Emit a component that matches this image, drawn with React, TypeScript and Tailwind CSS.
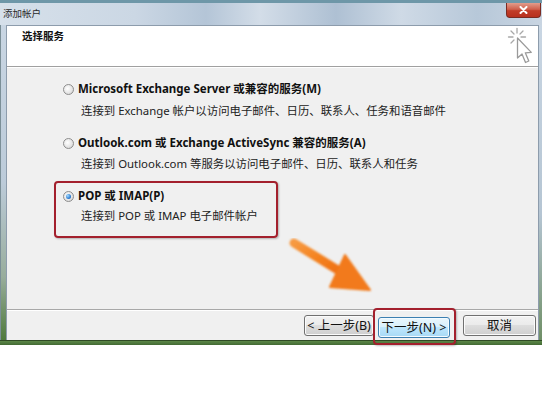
import React from "react";

function Radio({ checked }: { checked?: boolean }) {
  return (
    <span className="w-[11px] h-[11px] rounded-full border border-[#8d8d8d] bg-[radial-gradient(circle_at_40%_40%,#ffffff_0%,#e6e6e6_55%,#c9c9c9_100%)] flex items-center justify-center shrink-0">
      {checked && (
        <span className="w-[5px] h-[5px] rounded-full bg-[radial-gradient(circle_at_35%_35%,#a6dcff_0%,#2f7fd4_60%,#14468f_100%)]" />
      )}
    </span>
  );
}

function Option({
  title,
  desc,
  checked,
  cls,
  descGap,
}: {
  title: string;
  desc: string;
  checked?: boolean;
  cls: string;
  descGap: string;
}) {
  return (
    <div className={cls}>
      <div className="flex items-center h-[16px] gap-[4px]">
        <Radio checked={checked} />
        <span className="font-bold text-[11.5px] leading-[16px] text-[#111] whitespace-nowrap">{title}</span>
      </div>
      <div className={`${descGap} pl-[18px] h-[16px] text-[11.4px] leading-[16px] text-[#222] whitespace-nowrap`}>
        {desc}
      </div>
    </div>
  );
}

export default function App() {
  return (
    <div className="w-[542px] h-[414px] bg-white overflow-hidden font-['Noto_Sans','Noto_Sans_CJK_SC',sans-serif]">
      <div className="h-[345px] flex flex-col bg-[#c7d3df]">
        {/* Title bar */}
        <div className="h-[25px] shrink-0 flex items-start border-t-[3px] border-[#6e97a8] bg-[linear-gradient(90deg,#d6e0ea_0%,#cbd7e4_25%,#b4c5d7_38%,#d3dde8_48%,#aec0d3_62%,#cfdae6_74%,#b7c8d9_88%,#c9d5e2_100%)]">
          <span className="pl-[3px] pt-[4px] text-[9.5px] leading-[12px] text-[#2a2a2a] font-['Noto_Sans_CJK_SC',sans-serif]">
            添加帐户
          </span>
          <div className="ml-auto mr-[1px] h-[15px] w-[35px] rounded-b-[4px] border border-t-0 border-[#7a2b22] bg-[linear-gradient(#e39d8c_0%,#d0604c_45%,#c13d28_55%,#b8301e_100%)] flex items-center justify-center">
            <svg width="9" height="8" viewBox="0 0 9 8">
              <path d="M1.5 1 L7.5 7 M7.5 1 L1.5 7" stroke="#ffffff" strokeWidth="2" strokeLinecap="round" />
            </svg>
          </div>
        </div>

        <div className="flex flex-1 min-h-0">
          {/* left frame */}
          <div className="w-[6px] shrink-0 border-l border-[#7b8f97] bg-[linear-gradient(#c9d6e3_0%,#bccbd9_50%,#98ad9c_80%,#4f7a3c_100%)]" />
          {/* client */}
          <div className="flex-1 flex flex-col border-l border-t border-r border-[#8d9cac] bg-[#f0f0f0] min-w-0">
            {/* header */}
            <div className="h-[40px] shrink-0 bg-white flex items-start justify-between">
              <span className="pl-[15px] pt-[3px] text-[10.5px] leading-[14px] font-bold text-[#111] font-['Noto_Sans_CJK_SC',sans-serif]">
                选择服务
              </span>
              <svg width="30" height="40" viewBox="0 0 30 40" className="mr-[3px]">
                <g stroke="#a8a8a8" strokeWidth="1.3" strokeLinecap="round">
                  <path d="M12 2.5 L12 7" />
                  <path d="M3.5 11 L8 11" />
                  <path d="M16 11 L20.5 11" />
                  <path d="M6 5 L9 8" />
                  <path d="M18 5 L15 8" />
                  <path d="M6 17 L9 14" />
                </g>
                <path
                  d="M12.5 12 L12.5 32 L17 28 L20.5 36.5 L23.8 35 L20.3 26.8 L26.3 26.4 Z"
                  fill="#ffffff"
                  stroke="#9a9a9a"
                  strokeWidth="1.3"
                  strokeLinejoin="round"
                />
              </svg>
            </div>
            {/* separator */}
            <div className="h-[2px] shrink-0 border-t border-[#a0a0a0] bg-white" />
            {/* content */}
            <div className="flex-1 relative flex flex-col items-start pt-[6px] pl-[47px]">
              <Option
                title="Microsoft Exchange Server 或兼容的服务(M)"
                desc="连接到 Exchange 帐户以访问电子邮件、日历、联系人、任务和语音邮件"
                cls="border-2 border-transparent px-[7px] pt-[5px] pb-[7px]"
                descGap="mt-[6px]"
              />
              <Option
                title="Outlook.com 或 Exchange ActiveSync 兼容的服务(A)"
                desc="连接到 Outlook.com 等服务以访问电子邮件、日历、联系人和任务"
                cls="border-2 border-transparent px-[7px] pt-[5px] pb-[7px]"
                descGap="mt-[5px]"
              />
              <Option
                title="POP 或 IMAP(P)"
                desc="连接到 POP 或 IMAP 电子邮件帐户"
                checked
                cls="w-[224px] border-2 border-[#a3202d] rounded-[4px] px-[7px] pt-[5px] pb-[12px] shadow-[1px_1px_2px_rgba(0,0,0,0.25)]"
                descGap="mt-[4px]"
              />
              {/* orange annotation arrow */}
              <svg
                width="96"
                height="64"
                viewBox="0 0 96 64"
                className="absolute left-[278px] top-[166px]"
              >
                <defs>
                  <linearGradient id="og" x1="0" y1="0" x2="1" y2="1">
                    <stop offset="0" stopColor="#f79a42" />
                    <stop offset="0.5" stopColor="#f4821f" />
                    <stop offset="1" stopColor="#ef6f12" />
                  </linearGradient>
                  <filter id="soft" x="-10%" y="-10%" width="120%" height="120%">
                    <feGaussianBlur stdDeviation="0.8" />
                  </filter>
                </defs>
                <g filter="url(#soft)">
                  <path d="M9 9 L56 38" stroke="url(#og)" strokeWidth="9" strokeLinecap="round" />
                  <path d="M60 21 L85 56 L45 53 Z" fill="#f27a1a" stroke="#f27a1a" strokeWidth="2" strokeLinejoin="round" />
                </g>
              </svg>
            </div>
            {/* separator */}
            <div className="h-[2px] shrink-0 border-t border-[#a8a8a8] bg-white" />
            {/* footer */}
            <div className="h-[29px] shrink-0 flex items-center justify-end pr-[2px]">
              <button className="h-[21px] w-[70px] rounded-[3px] border border-[#707070] bg-[linear-gradient(#f2f2f2_0%,#ebebeb_45%,#dddddd_50%,#cfcfcf_100%)] shadow-[inset_0_0_0_1px_#fbfbfb] text-[12.5px] leading-[19px] text-[#111] whitespace-nowrap">
                &lt; 上一步(B)
              </button>
              <div className="relative ml-[4px]">
                <button className="h-[21px] w-[72px] rounded-[3px] border border-[#3c7fb1] bg-[linear-gradient(#eaf6fd_0%,#d9f0fc_45%,#bee6fd_50%,#a7d9f5_100%)] shadow-[inset_0_0_0_1px_#f4fbff] text-[12.5px] leading-[19px] text-[#111] whitespace-nowrap">
                  下一步(N) &gt;
                </button>
                <div className="absolute -left-[5px] -right-[6px] -top-[6px] -bottom-[7px] border-2 border-[#a3202d] rounded-[4px] shadow-[1px_1px_2px_rgba(0,0,0,0.25)]" />
              </div>
              <button className="ml-[13px] h-[21px] w-[73px] rounded-[3px] border border-[#707070] bg-[linear-gradient(#f2f2f2_0%,#ebebeb_45%,#dddddd_50%,#cfcfcf_100%)] shadow-[inset_0_0_0_1px_#fbfbfb] text-[12.5px] leading-[19px] text-[#111]">
                取消
              </button>
            </div>
          </div>
          {/* right frame */}
          <div className="w-[3px] shrink-0 bg-[linear-gradient(#c9d6e3_0%,#b5c5d3_60%,#6f8f66_100%)]" />
        </div>
        {/* bottom frame */}
        <div className="h-[5px] shrink-0 border-t border-[#2f4a24] bg-[linear-gradient(#5c8748,#426a33)]" />
      </div>
    </div>
  );
}
